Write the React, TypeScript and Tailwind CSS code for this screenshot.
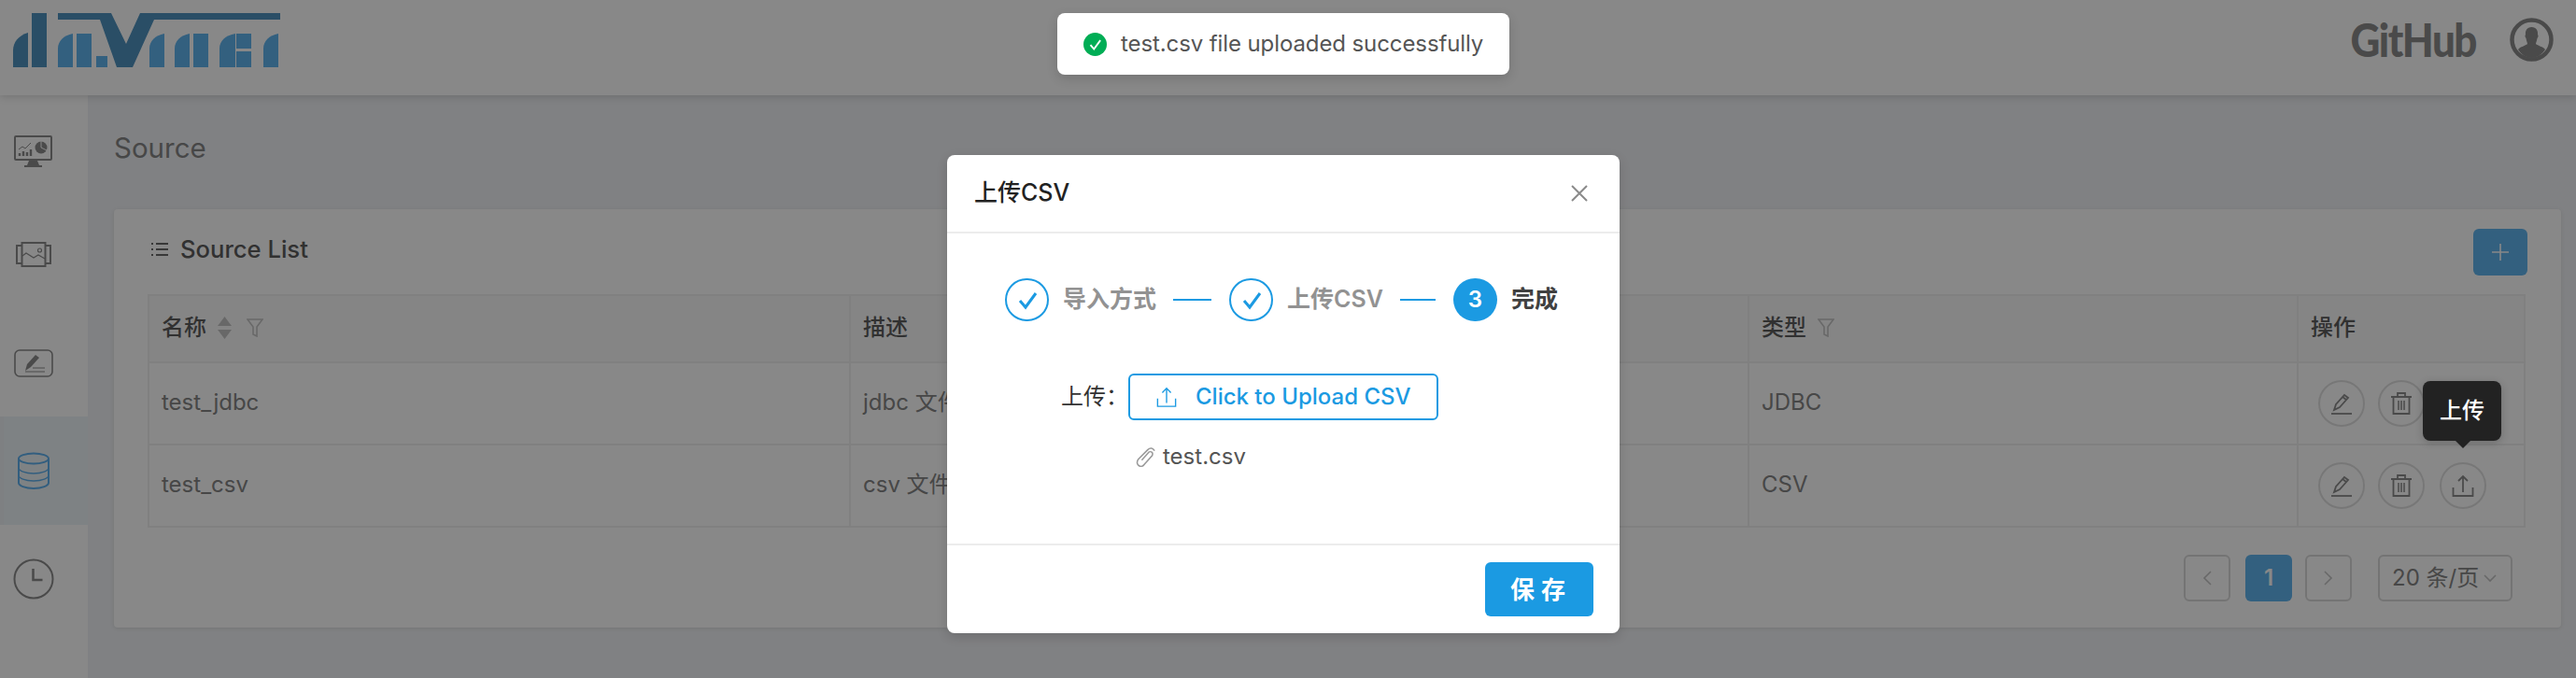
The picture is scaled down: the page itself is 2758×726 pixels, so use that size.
import React from "react";

const FONT = "font-['Inter','Noto_Sans_CJK_SC',sans-serif]";

function Logo() {
  const l = "#60b4ee";
  const d = "#4f92bf";
  const piece = (x: number, w = 16) => `M${x} 72V52C${x} 44 ${x + 6} 38 ${x + w} 36V72Z`;
  return (
    <svg width="300" height="60" viewBox="0 14 300 60" className="mt-[14px] block self-start">
      <path d="M14 72V54C14 45 20 38 30 35V72Z" fill={d} />
      <rect x="34" y="14" width="16" height="58" fill={d} />
      <path d={piece(62)} fill={l} />
      <path d="M82 36H98V72H82Z" fill={l} />
      <rect x="103" y="60" width="12" height="12" fill={l} />
      <path d="M62 14H119L135 47L150 14H300V21H165L142 72H125L107 21H62Z" fill={d} />
      <path d={piece(160)} fill={l} />
      <path d={piece(187)} fill={l} />
      <rect x="207" y="36" width="16" height="36" fill={l} />
      <path d={piece(235, 17)} fill={l} />
      <rect x="253" y="36" width="16" height="16" fill={l} />
      <rect x="253" y="55" width="16" height="17" fill={l} />
      <path d={piece(282)} fill={l} />
    </svg>
  );
}

function MonitorIcon() {
  return (
    <svg width="41" height="35" viewBox="0 0 41 35" fill="none" stroke="#8c8c8c">
      <rect x="1" y="1" width="39" height="25" rx="1" strokeWidth="2" />
      <path d="M16 27h9l2 5h3v2H11v-2h3z" fill="#8c8c8c" stroke="none" />
      <path d="M5 15l4-3 3 2 6-6" strokeWidth="1" />
      <path d="M6 22v-3M10 22v-5M14 22v-4M18 22v-7" strokeWidth="2.4" />
      <circle cx="29" cy="13" r="6.5" fill="#8c8c8c" stroke="none" />
      <path d="M29 13V6M29 13l6 3" stroke="#ffffff" strokeWidth="1" />
    </svg>
  );
}
function ImageIcon() {
  return (
    <svg width="38" height="27" viewBox="0 0 38 27" fill="none" stroke="#8c8c8c" strokeWidth="2">
      <rect x="6.5" y="1" width="25" height="25" />
      <path d="M6 4H1v19h5M32 4h5v19h-5" />
      <path d="M7 15l4-3 8 5 5-3 7 4" strokeWidth="1.2" />
      <circle cx="25.5" cy="9" r="2" strokeWidth="1.2" />
    </svg>
  );
}
function EditIcon() {
  return (
    <svg width="42" height="30" viewBox="0 0 42 30" fill="none" stroke="#8c8c8c">
      <rect x="1" y="1" width="40" height="28" rx="5" strokeWidth="1.6" />
      <path d="M12 23l2-7 9-10 4 3-9 10z" fill="#8c8c8c" stroke="none" />
      <path d="M20 20h13M12 24h21" strokeWidth="1" />
    </svg>
  );
}
function DbIcon() {
  return (
    <svg width="36" height="40" viewBox="0 0 36 40" fill="none" stroke="#5eb0ee" strokeWidth="2">
      <ellipse cx="18" cy="7" rx="16" ry="5.5" />
      <path d="M2 7v26c0 3 7 6 16 6s16-3 16-6V7" />
      <path d="M2 17c0 3 7 6 16 6s16-3 16-6M2 25c0 3 7 6 16 6s16-3 16-6" strokeWidth="1.4" />
    </svg>
  );
}
function ClockIcon() {
  return (
    <svg width="44" height="44" viewBox="0 0 44 44" fill="none" stroke="#8c8c8c">
      <circle cx="22" cy="22" r="20.5" strokeWidth="2" />
      <path d="M21.5 11v12h10" strokeWidth="2.5" />
    </svg>
  );
}
function AvatarIcon() {
  return (
    <svg width="47" height="47" viewBox="0 0 47 47">
      <circle cx="23.5" cy="23.5" r="21" fill="none" stroke="#8c8c8c" strokeWidth="4.5" />
      <path d="M23.5 10c5 0 7 4 6.500 8 1 1 .5 3-.5 4-.5 3-1.500 5-1.500 6 2 2 8 3 10 6-3 5-9 9-14.500 9S12 39 9 34c2-3 8-4 10-6 0-1-1-3-1.500-6-1-1-1.500-3-.5-4-.5-4 1.500-8 6.500-8z" fill="#8c8c8c" />
    </svg>
  );
}
function Pencil() {
  return (
    <svg width="24" height="24" viewBox="0 0 24 24" fill="none" stroke="#8c8c8c" strokeWidth="1.8">
      <path d="M1 23h22" />
      <path d="M4 19l2-6 9-10 4 3-9 10z" />
      <path d="M13 5l4 3" />
    </svg>
  );
}
function Trash() {
  return (
    <svg width="22" height="24" viewBox="0 0 22 24" fill="none" stroke="#8c8c8c" strokeWidth="1.8">
      <path d="M0 5h22M7 5V1h8v4" />
      <path d="M2.500 5v18h17V5" />
      <path d="M8 9v10M11 9v10M14 9v10" strokeWidth="1.5" />
    </svg>
  );
}
function UploadGlyph({ color, w = 24, sw = 1.8 }: { color: string; w?: number; sw?: number }) {
  return (
    <svg width={w} height={w} viewBox="0 0 24 24" fill="none" stroke={color} strokeWidth={sw}>
      <path d="M12 19V2M7 7l5-5 5 5" />
      <path d="M1.500 14v9h21v-9" />
    </svg>
  );
}
function Funnel() {
  return (
    <svg width="18" height="20" viewBox="0 0 18 20" fill="none" stroke="#c4c4c4" strokeWidth="1.6">
      <path d="M1 1h16l-6 8v10l-4-2V9z" />
    </svg>
  );
}
function Sorter() {
  return (
    <svg width="15" height="24" viewBox="0 0 15 24" fill="#c4c4c4">
      <path d="M7.500 0L15 10H0zM7.500 24L0 14h15z" />
    </svg>
  );
}
function Check({ size = 24 }: { size?: number }) {
  return (
    <svg width={size} height={size} viewBox="0 0 24 24" fill="none" stroke="#1b9ae2" strokeWidth="3">
      <path d="M4 13l6 7L21 5" />
    </svg>
  );
}

function Actions({ upload }: { upload: boolean }) {
  const c = "flex h-[50px] w-[50px] items-center justify-center rounded-full border-2 border-[#e0e0e0]";
  return (
    <div className="flex items-center pl-[21px]">
      <span className={c}><Pencil /></span>
      <span className={`${c} ml-[14px]`}><Trash /></span>
      {upload && <span className={`${c} ml-[16px]`}><UploadGlyph color="#8c8c8c" /></span>}
    </div>
  );
}

function Th({ children }: { children: React.ReactNode }) {
  return (
    <th className="h-[72px] border-2 border-[#f0f0f0] bg-[#fafafa] pb-[3px] pl-[13px] pr-[14px] text-left text-[24px] font-medium text-[#5c5c5c]">
      <div className="flex items-center">{children}</div>
    </th>
  );
}
function Td({ children }: { children: React.ReactNode }) {
  return <td className="h-[88px] border-2 border-[#f0f0f0] pb-[3px] pl-[13px] pr-[14px] text-[24px] text-[#858585]">{children}</td>;
}

function Step({ n, label, state }: { n: number; label: string; state: "done" | "active" }) {
  return (
    <div className="flex items-center">
      {state === "done" ? (
        <span className="flex h-[46px] w-[47px] items-center justify-center rounded-full border-2 border-[#1b9ae2]"><Check /></span>
      ) : (
        <span className="flex h-[46px] w-[47px] items-center justify-center rounded-full bg-[#1b9ae2] text-[24px] font-semibold text-white">{n}</span>
      )}
      <span className={`ml-[15px] text-[25px] font-semibold ${state === "done" ? "text-[#929292]" : "text-[#404040]"}`}>{label}</span>
    </div>
  );
}

export default function App() {
  return (
    <div className={`relative h-[726px] w-[2758px] overflow-hidden bg-[#f0f2f5] ${FONT}`}>
      <header className="relative z-10 flex h-[102px] items-center justify-between bg-white pr-[24px] shadow-[0_2px_8px_rgba(0,0,0,0.15)]">
        <Logo />
        <div className="flex items-center gap-[36px] pb-[18px]">
          <span className="origin-center scale-y-[1.12] font-['Lato',sans-serif] text-[44px] font-black leading-none tracking-[-1.5px] text-[#8c8c8c]">GitHub</span>
          <AvatarIcon />
        </div>
      </header>

      <div className="flex h-[624px]">
        <aside className="flex w-[94px] flex-col bg-white">
          <div className="flex h-[114px] items-center justify-center pr-[23px] pt-[6px]"><MonitorIcon /></div>
          <div className="flex h-[115px] items-center justify-center pb-[2px] pr-[23px]"><ImageIcon /></div>
          <div className="flex h-[115px] items-center justify-center pr-[23px]"><EditIcon /></div>
          <div className="flex h-[116px] items-center justify-center border-l-[4px] border-[#edf0f3] bg-[#edf3f7] pr-[27px]"><DbIcon /></div>
          <div className="flex h-[116px] items-center justify-center pr-[23px]"><ClockIcon /></div>
        </aside>

        <main className="flex-1 pl-[28px] pr-[16px]">
          <h1 className="flex h-[122px] items-center pb-[10px] text-[29.5px] font-normal text-[#858585]">Source</h1>
          <section className="h-[448px] rounded-[4px] bg-white px-[36px] shadow-[0_1px_4px_rgba(0,0,0,0.1)]">
            <div className="flex h-[91px] items-center justify-between pb-[22px] pl-[3px] pt-[18px]">
              <div className="flex items-center gap-[13px] text-[25.6px] font-medium text-[#5c5c5c]">
                <svg width="19" height="16" viewBox="0 0 19 16" fill="none" stroke="#6a6a6a" strokeWidth="1.8">
                  <path d="M6 2h13M6 8h13M6 14h13M1 2h2M1 8h2M1 14h2" />
                </svg>
                Source List
              </div>
              <button className="mt-[4px] flex h-[50px] w-[58px] items-center justify-center rounded-[6px] bg-[#60b4ee]">
                <svg width="20" height="20" viewBox="0 0 20 20" stroke="#ffffff" strokeWidth="1.6"><path d="M10 1v18M1 10h18" /></svg>
              </button>
            </div>

            <table className="w-[2544px] table-fixed border-collapse">
              <colgroup>
                <col className="w-[751px]" />
                <col className="w-[962px]" />
                <col className="w-[588px]" />
                <col className="w-[243px]" />
              </colgroup>
              <thead>
                <tr>
                  <Th>名称<span className="ml-[12px]"><Sorter /></span><span className="ml-[16px]"><Funnel /></span></Th>
                  <Th>描述</Th>
                  <Th>类型<span className="ml-[12px]"><Funnel /></span></Th>
                  <Th>操作</Th>
                </tr>
              </thead>
              <tbody>
                <tr>
                  <Td>test_jdbc</Td>
                  <Td>jdbc 文件</Td>
                  <Td>JDBC</Td>
                  <td className="h-[88px] border-2 border-[#f0f0f0] px-0"><Actions upload={false} /></td>
                </tr>
                <tr>
                  <Td>test_csv</Td>
                  <Td>csv 文件</Td>
                  <Td>CSV</Td>
                  <td className="h-[88px] border-2 border-[#f0f0f0] px-0"><Actions upload /></td>
                </tr>
              </tbody>
            </table>

            <div className="mt-[29px] flex items-center justify-end pr-[16px] text-[24px] text-[#858585]">
              <span className="flex h-[50px] w-[50px] items-center justify-center rounded-[6px] border-2 border-[#d9d9d9]">
                <svg width="10" height="16" viewBox="0 0 10 16" fill="none" stroke="#c4c4c4" strokeWidth="1.6"><path d="M9 1L2 8l7 7" /></svg>
              </span>
              <span className="ml-[16px] flex h-[50px] w-[50px] items-center justify-center rounded-[6px] bg-[#60b4ee] font-semibold text-[#ffffff]">1</span>
              <span className="ml-[14px] flex h-[50px] w-[50px] items-center justify-center rounded-[6px] border-2 border-[#d9d9d9]">
                <svg width="10" height="16" viewBox="0 0 10 16" fill="none" stroke="#c4c4c4" strokeWidth="1.6"><path d="M1 1l7 7-7 7" /></svg>
              </span>
              <span className="ml-[28px] flex h-[50px] w-[144px] items-center rounded-[6px] border-2 border-[#d9d9d9] pl-[13px]">
                20 条/页
                <svg className="ml-[5px]" width="14" height="9" viewBox="0 0 14 9" fill="none" stroke="#c4c4c4" strokeWidth="1.6"><path d="M1 1l6 6 6-6" /></svg>
              </span>
            </div>
          </section>
        </main>
      </div>

      {/* modal mask */}
      <div className="absolute inset-0 z-20 bg-black/[0.467]" />

      {/* tooltip */}
      <div className="absolute left-[2594px] top-[408px] z-30 flex h-[64px] w-[84px] items-center justify-center rounded-[8px] bg-[#222222] text-[24px] font-medium text-white shadow-[0_2px_8px_rgba(0,0,0,0.2)]">
        上传
        <span className="absolute left-[34px] top-[63px] h-0 w-0 border-x-[9px] border-t-[9px] border-x-transparent border-t-[#222222]" />
      </div>

      {/* modal */}
      <div className="absolute left-[1014px] top-[166px] z-30 flex h-[512px] w-[720px] flex-col rounded-[8px] bg-white shadow-[0_4px_12px_rgba(0,0,0,0.15)]">
        <div className="flex h-[84px] items-center justify-between border-b-2 border-[#ececec] pl-[29px] pr-[34px]">
          <span className="text-[25px] font-medium text-[#222222]">上传CSV</span>
          <svg width="18" height="18" viewBox="0 0 18 18" stroke="#8a8a8a" strokeWidth="2"><path d="M1 1l16 16M17 1L1 17" /></svg>
        </div>

        <div className="ml-[62px] mt-[48px] flex items-center">
          <Step n={1} label="导入方式" state="done" />
          <span className="ml-[18px] mr-[19px] h-[2px] w-[41px] bg-[#1b9ae2]" />
          <Step n={2} label="上传CSV" state="done" />
          <span className="ml-[18px] mr-[19px] h-[2px] w-[38px] bg-[#1b9ae2]" />
          <Step n={3} label="完成" state="active" />
        </div>

        <div className="mt-[56px] flex items-center pl-[122px]">
          <span className="text-[24px] text-[#333333]">上传：</span>
          <button className="flex h-[50px] w-[332px] items-center rounded-[6px] border-2 border-[#1b9ae2] pl-[28px] text-[24px] font-medium text-[#1b9ae2]">
            <UploadGlyph color="#1b9ae2" w={22} sw={1.5} />
            <span className="ml-[20px]">Click to Upload CSV</span>
          </button>
        </div>

        <div className="ml-[202px] mt-[21px] flex items-center text-[24px] text-[#555555]">
          <svg width="22" height="22" viewBox="0 0 24 24" fill="none" stroke="#9a9a9a" strokeWidth="1.7">
            <path d="M22 5c-2-3-5-4-8-1L3 15c-2 3-2 5 0 7s5 2 7-1l9-10c1-2 1-3 0-4s-3-1-4 0L7 16" />
          </svg>
          <span className="ml-[7px]">test.csv</span>
        </div>

        <div className="mt-auto flex h-[96px] items-center justify-end border-t-2 border-[#ececec] pr-[28px]">
          <button className="h-[58px] w-[116px] rounded-[6px] bg-[#1b9ae2] pl-[4px] text-[26px] font-semibold tracking-[7px] text-white">保存</button>
        </div>
      </div>

      {/* toast */}
      <div className="absolute left-[1132px] top-[14px] z-40 flex h-[66px] w-[484px] items-center rounded-[8px] bg-white pl-[28px] text-[24px] tracking-[-0.1px] text-[#555555] shadow-[0_4px_12px_rgba(0,0,0,0.15)]">
        <span className="flex h-[25px] w-[25px] items-center justify-center rounded-full bg-[#00ad55]">
          <svg width="15" height="15" viewBox="0 0 24 24" fill="none" stroke="#ffffff" strokeWidth="3"><path d="M4 13l6 7L21 5" /></svg>
        </span>
        <span className="ml-[15px]">test.csv file uploaded successfully</span>
      </div>
    </div>
  );
}
